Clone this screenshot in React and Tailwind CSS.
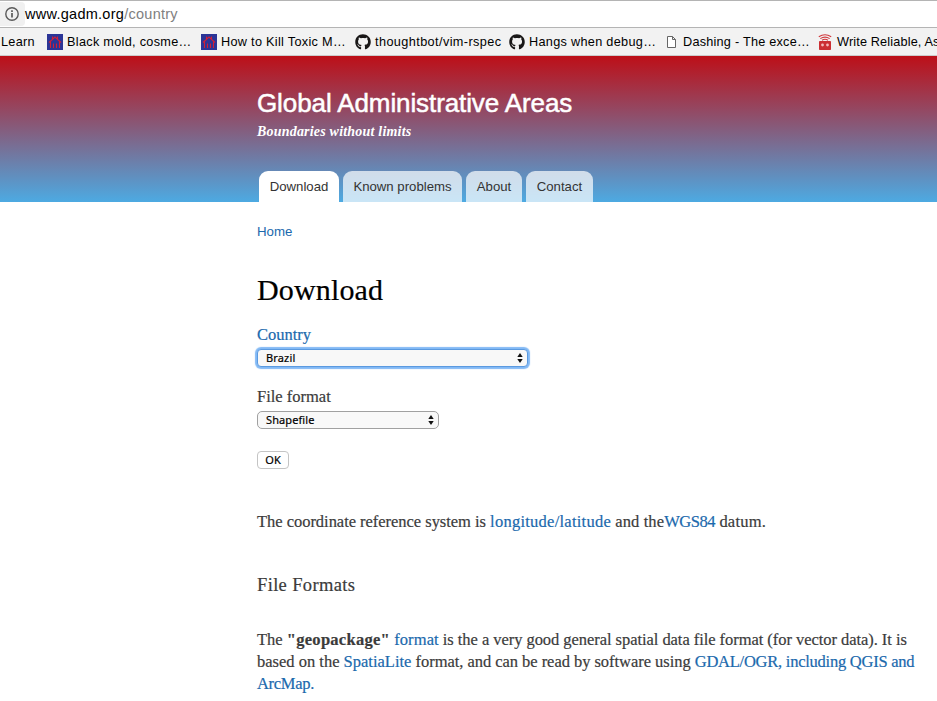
import { FaGithub } from "react-icons/fa";

const sans = "font-['Liberation_Sans',Arial,sans-serif]";
const ui = "font-['Noto_Sans','Open_Sans',sans-serif]";

function HouseIcon() {
  return (
    <svg width="16" height="16" viewBox="0 0 16 16" className="shrink-0">
      <rect width="16" height="16" fill="#2b3597" />
      <path d="M2 8.500L8 3l6 5.500M3.500 7.500V14M12.500 7.500V14M6.500 14V9.500M9.500 9.500V14M5.500 2.500v3M10.500 2.500v3" fill="none" stroke="#d01f38" strokeWidth="1.100" />
    </svg>
  );
}

function PageIcon() {
  return (
    <svg width="9" height="12" viewBox="0 0 9 12" className="shrink-0">
      <path d="M.5.5h5l3 3v8h-8zM5.500.500v3h3" fill="#fff" stroke="#666" />
    </svg>
  );
}

function RobotIcon() {
  return (
    <svg width="14" height="16" viewBox="0 0 14 16" className="shrink-0">
      <path d="M.8 2.800Q7-1.200 13.200 2.800M2.300 4.600Q7 1.600 11.700 4.600M4 6.200Q7 4.400 10 6.200" fill="none" stroke="#d0383c" strokeWidth="1.100" />
      <rect x="1" y="7" width="12" height="9" rx=".8" fill="#cb2f33" />
      <circle cx="4.500" cy="11" r="1.400" fill="#f3b9ba" />
      <circle cx="9.500" cy="11" r="1.400" fill="#f3b9ba" />
    </svg>
  );
}

function Arrows() {
  return (
    <svg width="6" height="10" viewBox="0 0 6 10" className="shrink-0">
      <path d="M3 0l2.700 4H.3zM3 10L.3 6h5.400z" fill="#111" />
    </svg>
  );
}

function Bookmark({ icon, width, gap, children }) {
  return (
    <div className={`flex h-full shrink-0 items-center ${width} ${gap}`}>
      {icon}
      <span className="pt-[2px]">{children}</span>
    </div>
  );
}

function Link({ className = "", children }) {
  return <a className={`text-[#1b69ad] ${className}`}>{children}</a>;
}

function Tab({ active, width, children }) {
  return (
    <a className={`flex h-[31px] items-center justify-center rounded-t-[9px] text-[13.200px] leading-none text-[#333] ${width} ${active ? "bg-white" : "bg-white/70"}`}>
      {children}
    </a>
  );
}

export default function App() {
  return (
    <div className="h-[701px] w-[937px] overflow-hidden bg-white font-['Liberation_Serif',Georgia,serif] text-[#3b3b3b]">
      <div className={`flex h-[28px] items-center border-y border-[#b4b4b4] bg-white ${sans}`}>
        <div className="flex h-[24px] w-[25px] items-center rounded-r-sm bg-[#f0f0f0] pl-[5px]">
          <svg width="14" height="14" viewBox="0 0 14 14">
            <circle cx="7" cy="7" r="6.200" fill="none" stroke="#5a5a5a" strokeWidth="1.400" />
            <path d="M7 6v4.500M7 3.300v1.600" stroke="#5a5a5a" strokeWidth="1.700" />
          </svg>
        </div>
        <div className="pt-px text-[14.500px] tracking-[0.270px] text-black">www.gadm.org<span className="text-[#808080]">/country</span></div>
      </div>
      <div className={`flex h-[28px] items-center whitespace-nowrap border-b border-[#ccc] bg-[#f2f2f2] pl-px text-[12.700px] tracking-[0.300px] text-black ${sans}`}>
        <Bookmark width="w-[46px]" gap="">Learn</Bookmark>
        <Bookmark icon={<HouseIcon />} width="w-[154px]" gap="gap-[4px]">Black mold, cosme…</Bookmark>
        <Bookmark icon={<HouseIcon />} width="w-[154px]" gap="gap-[4px]">How to Kill Toxic M…</Bookmark>
        <Bookmark icon={<FaGithub size={16} color="#191717" className="shrink-0" />} width="w-[154px]" gap="gap-[4px]"><span className="tracking-[0.400px]">thoughtbot/vim-rspec</span></Bookmark>
        <Bookmark icon={<FaGithub size={16} color="#191717" className="shrink-0" />} width="w-[158px]" gap="gap-[4px]">Hangs when debug…</Bookmark>
        <Bookmark icon={<PageIcon />} width="w-[151px]" gap="gap-[7px]"><span className="tracking-[0.230px]">Dashing - The exce…</span></Bookmark>
        <Bookmark icon={<RobotIcon />} width="w-[119px]" gap="gap-[5px]"><span className="tracking-[0.150px]">Write Reliable, As</span></Bookmark>
      </div>
      <header className="flex h-[146px] flex-col bg-linear-to-b/srgb from-[#bd0f18] to-[#4daae2] pl-[257px]">
        <h1 className={`mt-[32px] h-[30px] text-[26px] leading-[30px] tracking-[-0.100px] text-white [-webkit-text-stroke:0.500px_white] ${sans}`}>Global Administrative Areas</h1>
        <p className="mt-[5px] h-[18px] text-[14px] font-bold italic leading-[18px] tracking-[0.200px] text-white">Boundaries without limits</p>
        <nav className={`mt-auto flex gap-[4px] pl-[2px] ${sans}`}>
          <Tab active width="w-[80px]">Download</Tab>
          <Tab width="w-[119px]">Known problems</Tab>
          <Tab width="w-[56px]">About</Tab>
          <Tab width="w-[67px]">Contact</Tab>
        </nav>
      </header>
      <main className="pl-[257px] [-webkit-text-stroke:0.200px_currentColor]">
        <div className={`pt-[20px] text-[13.300px] leading-[20px] [-webkit-text-stroke:0] ${sans}`}><Link>Home</Link></div>
        <h2 className="mt-[30px] text-[30px] leading-[36px] tracking-[0.150px] text-black">Download</h2>
        <div className="mt-[16px] text-[16.500px] leading-[22px]"><Link>Country</Link></div>
        <div className={`mt-[3px] flex h-[18px] w-[271px] items-center justify-between rounded-[4px] border border-[#5b9ae0] bg-[#f8f8f8] pl-[8px] pr-[4px] text-[11px] leading-none text-black shadow-[0_0_1px_2px_#82b9f5] ${ui}`}><span className="pb-[2px] tracking-[0.150px]">Brazil</span><Arrows /></div>
        <div className="mt-[19px] text-[16.500px] leading-[22px]">File format</div>
        <div className={`mt-[3px] flex h-[18px] w-[182px] items-center justify-between rounded-[5px] border border-[#a0a0a0] bg-[#f8f8f8] pl-[8px] pr-[4px] text-[11px] leading-none text-black ${ui}`}><span className="pb-[2px] tracking-[0.100px]">Shapefile</span><Arrows /></div>
        <button className={`mt-[22px] flex h-[18px] w-[32px] items-center justify-center rounded-[4px] border border-[#c4c4c4] bg-white pb-[2px] text-[11px] leading-none text-black ${ui}`}>OK</button>
        <p className="mt-[42px] text-[16.500px] leading-[22px]"><span className="tracking-[-0.030px]">The coordinate reference system is </span><Link className="tracking-[0.250px]">longitude/latitude</Link><span className="tracking-[0.120px]"> and the</span><Link className="tracking-[-0.450px]">WGS84</Link><span className="tracking-[0.200px]"> datum.</span></p>
        <h3 className="mt-[40px] text-[18.500px] leading-[24px] tracking-[0.350px]">File Formats</h3>
        <div className="mt-[32px] whitespace-nowrap text-[16.500px] leading-[22px]">
          <p>The <b className="tracking-[0.280px]">"geopackage"</b> <Link className="tracking-[0.100px]">format</Link><span className="tracking-[-0.050px]"> is the a very good general spatial data file format (for vector data). It is</span></p>
          <p>based on the <Link>SpatiaLite</Link><span className="tracking-[-0.040px]"> format, and can be read by software using </span><Link className="tracking-[-0.240px]">GDAL/OGR, including QGIS and</Link></p>
          <p><Link className="tracking-[-0.300px]">ArcMap.</Link></p>
        </div>
      </main>
    </div>
  );
}
